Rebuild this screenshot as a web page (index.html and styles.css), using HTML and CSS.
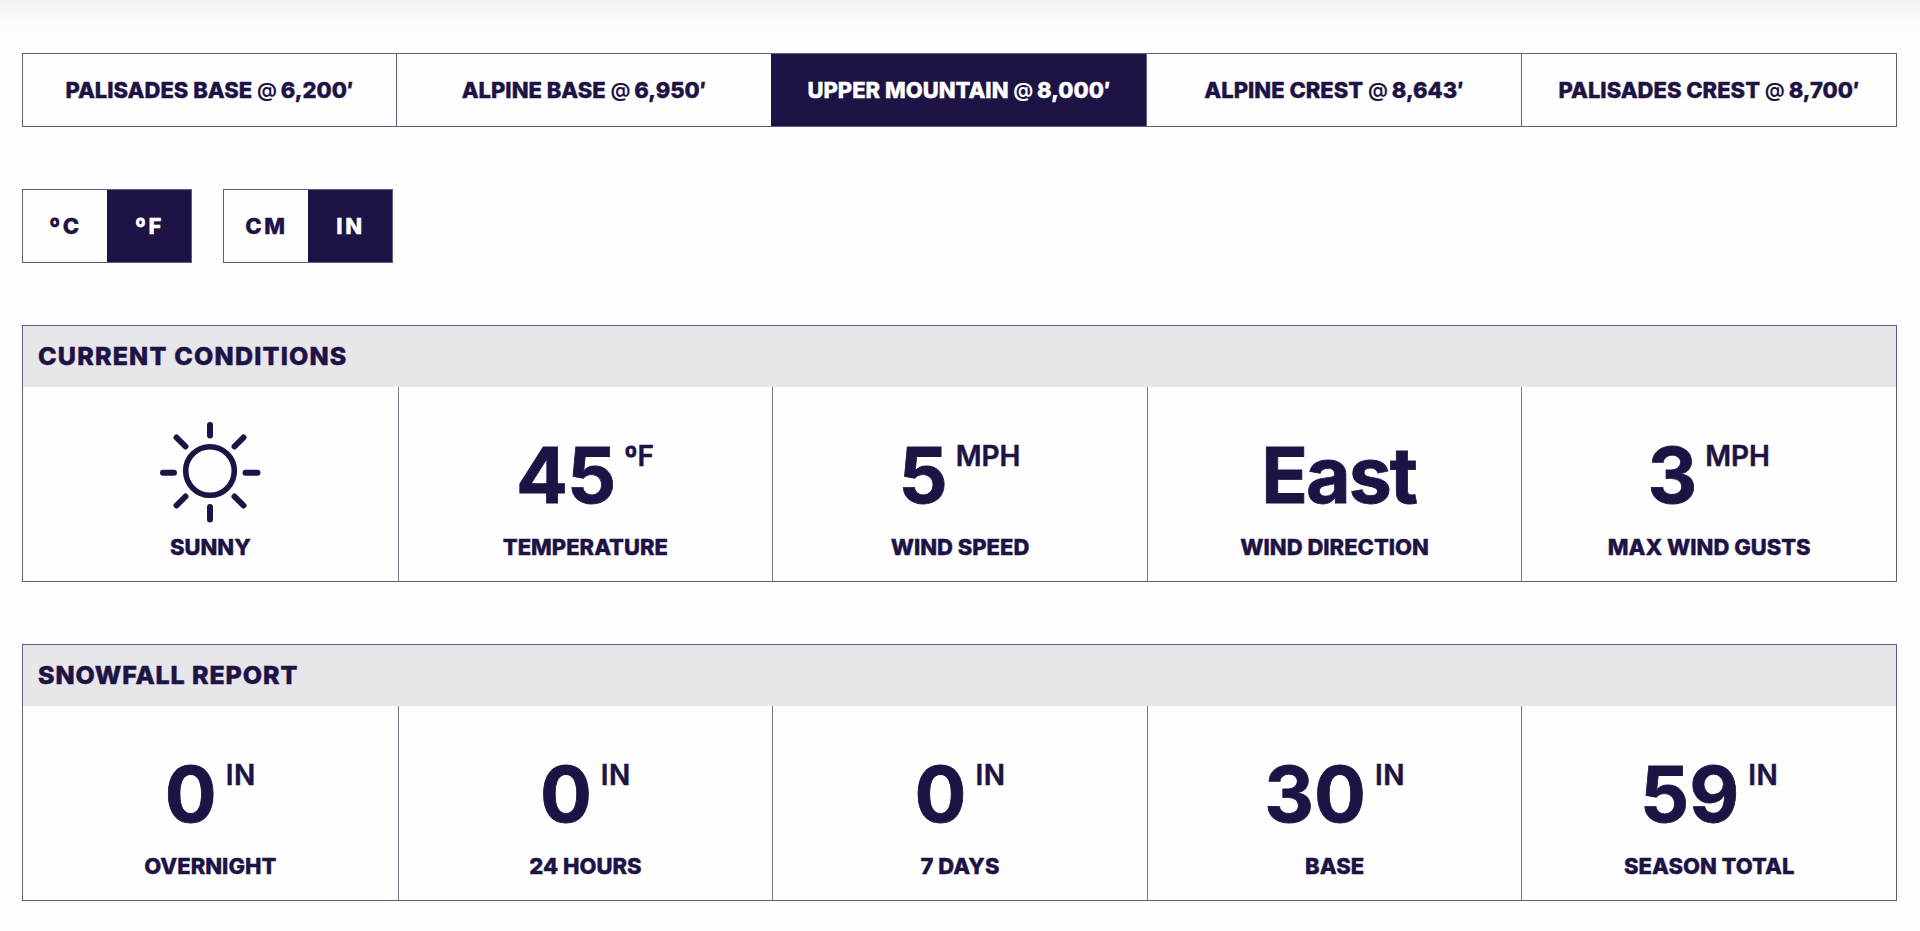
FILE: index.html
```html
<!DOCTYPE html>
<html lang="en">
<head>
    <meta charset="UTF-8">
    <meta name="viewport" content="width=device-width, initial-scale=1.0">
    <title>Mountain Weather</title>
    <link rel="stylesheet" href="styles.css">
</head>
<body>

<div class="tabs">
    <div class="tab">PALISADES BASE <span class="at">@</span> 6,200′</div>
    <div class="tab">ALPINE BASE <span class="at">@</span> 6,950′</div>
    <div class="tab active">UPPER MOUNTAIN <span class="at">@</span> 8,000′</div>
    <div class="tab">ALPINE CREST <span class="at">@</span> 8,643′</div>
    <div class="tab">PALISADES CREST <span class="at">@</span> 8,700′</div>
</div>

<div class="toggles">
    <div class="toggle">
        <div class="option"><span class="degree">º</span>C</div>
        <div class="option active"><span class="degree">º</span>F</div>
    </div>
    <div class="toggle">
        <div class="option">CM</div>
        <div class="option active">IN</div>
    </div>
</div>

<div class="panel conditions">
    <h2>CURRENT CONDITIONS</h2>
    <div class="cells">
        <div class="cell">
            <div class="value icon">
                <svg class="sun" viewBox="0 0 106 106" fill="none" stroke="#1e1345" stroke-linecap="round">
                    <circle cx="53" cy="52" r="24.3" stroke-width="5.6"/>
                    <path stroke-width="6" d="M53 6v10.500M53 88v12.500M6 53.800h11M88.500 53.800h12M19.500 18.500l9 9M86.500 18.500l-9 9M19.500 86.500l9-9M86.500 86.500l-9-9"/>
                </svg>
            </div>
            <div class="label">SUNNY</div>
        </div>
        <div class="cell">
            <div class="value">45<span class="unit"><span class="degree">º</span>F</span></div>
            <div class="label">TEMPERATURE</div>
        </div>
        <div class="cell">
            <div class="value">5<span class="unit">MPH</span></div>
            <div class="label">WIND SPEED</div>
        </div>
        <div class="cell">
            <div class="value word">East</div>
            <div class="label">WIND DIRECTION</div>
        </div>
        <div class="cell">
            <div class="value">3<span class="unit">MPH</span></div>
            <div class="label">MAX WIND GUSTS</div>
        </div>
    </div>
</div>

<div class="panel snowfall">
    <h2>SNOWFALL REPORT</h2>
    <div class="cells">
        <div class="cell">
            <div class="value">0<span class="unit">IN</span></div>
            <div class="label">OVERNIGHT</div>
        </div>
        <div class="cell">
            <div class="value">0<span class="unit">IN</span></div>
            <div class="label">24 HOURS</div>
        </div>
        <div class="cell">
            <div class="value">0<span class="unit">IN</span></div>
            <div class="label">7 DAYS</div>
        </div>
        <div class="cell">
            <div class="value">30<span class="unit">IN</span></div>
            <div class="label">BASE</div>
        </div>
        <div class="cell">
            <div class="value">59<span class="unit">IN</span></div>
            <div class="label">SEASON TOTAL</div>
        </div>
    </div>
</div>

</body>
</html>
```
FILE: styles.css
```css
* {
    box-sizing: border-box;
}
body {
    margin: 0;
    padding: 53px 23px 0 22px;
    min-height: 931px;
    font-family: Inter, "Liberation Sans", sans-serif;
    font-size: 22px;
    font-weight: 800;
    color: #1e1345;
    background: linear-gradient(#f2f2f2, #fbfbfb 22px, #fefefe 45px, #fefefe) no-repeat;
}
.tabs {
    display: grid;
    grid-template-columns: 373px 375px 375px 375px 1fr;
    height: 74px;
    border: 1px solid #625a80;
}
.tab, .option {
    display: flex;
    align-items: center;
    justify-content: center;
    white-space: pre;
    -webkit-text-stroke: 0.4px currentColor;
}
.tab + .tab {
    border-left: 1px solid #625a80;
}
.tab.active, .option.active {
    background-color: #1e1345;
    border-color: #1e1345;
    color: white;
}
.at {
    font-size: 20px;
    font-weight: 600;
    letter-spacing: -1px;
    -webkit-text-stroke: 0;
}
.toggles {
    display: flex;
    gap: 31px;
    margin-top: 62px;
}
.toggle {
    display: grid;
    grid-template-columns: 1fr 1fr;
    width: 170px;
    height: 74px;
    border: 1px solid #625a80;
}
.option {
    padding-left: 1px;
    letter-spacing: 2.6px;
}
.degree {
    -webkit-text-stroke: 1.2px currentColor;
}
.panel {
    border: 1px solid #625a80;
}
.conditions {
    margin-top: 62px;
}
.snowfall {
    margin-top: 62px;
}
h2 {
    display: flex;
    align-items: center;
    height: 61px;
    margin: 0;
    padding: 0 0 1px 15px;
    font-size: 25px;
    font-weight: 800;
    letter-spacing: 1.2px;
    background-color: #e7e6eb;
    -webkit-text-stroke: 0.5px currentColor;
}
.snowfall h2 {
    letter-spacing: 0.9px;
}
.cells {
    display: grid;
    grid-template-columns: repeat(5, 1fr);
    height: 194px;
}
.cell {
    display: flex;
    flex-direction: column;
    align-items: center;
    padding-top: 31px;
}
.cell + .cell {
    border-left: 1px solid #7a7394;
}
.value {
    display: flex;
    height: 115px;
    padding-right: 1px;
    font-size: 77px;
    font-weight: 700;
    letter-spacing: -1px;
    line-height: 114px;
    -webkit-text-stroke: 0.8px currentColor;
}
.icon {
    padding: 1px 0 0;
}
.word {
    padding: 0 0 0 8px;
    letter-spacing: -2px;
}
.unit {
    margin-left: 9px;
    font-size: 28px;
    font-weight: 600;
    letter-spacing: 0;
    line-height: 77px;
    -webkit-text-stroke: 0.5px currentColor;
}
.snowfall .value {
    padding-right: 0;
    letter-spacing: 0;
}
.snowfall .unit {
    letter-spacing: 0.5px;
}
.sun {
    width: 106px;
    height: 106px;
}
.label {
    line-height: 28px;
    -webkit-text-stroke: 0.4px currentColor;
}
```
